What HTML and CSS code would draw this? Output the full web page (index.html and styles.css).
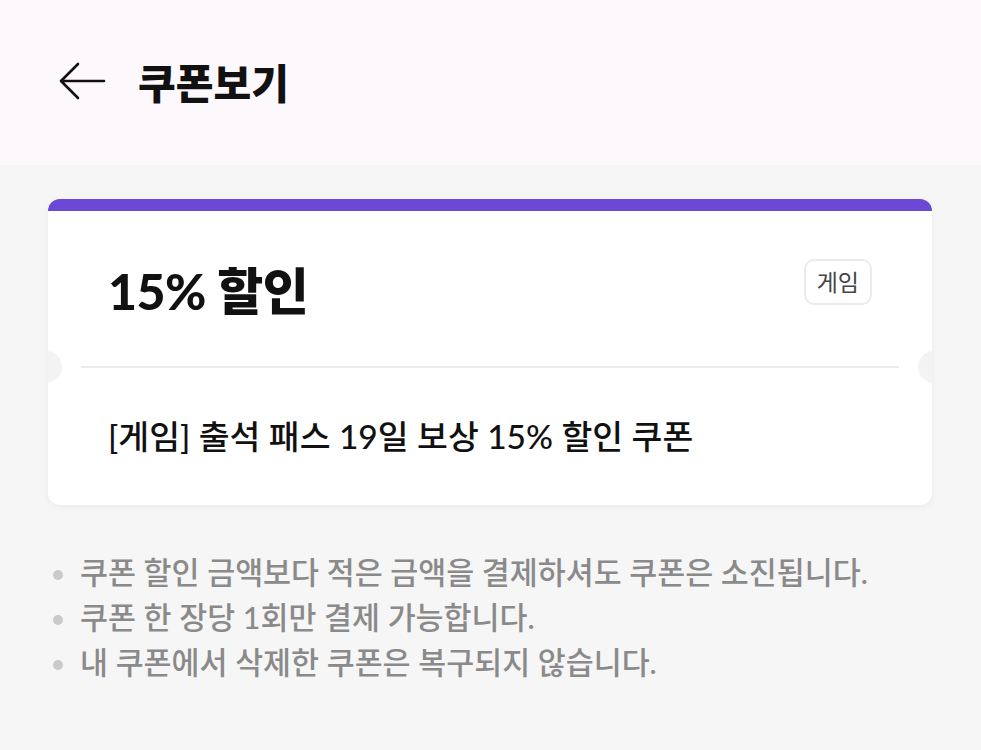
FILE: index.html
```html
<!DOCTYPE html>
<html lang="ko">
<head>
<meta charset="utf-8">
<link rel="stylesheet" href="styles.css">
</head>
<body>
<header class="header">
  <svg class="back" width="48" height="40" viewBox="0 0 48 40" aria-hidden="true">
    <path d="M46 20 H4 M20 3 L3 20 L20 37" fill="none" stroke="#111" stroke-width="2.6" stroke-linecap="round" stroke-linejoin="round"/>
  </svg>
  <h1 class="title">쿠폰보기</h1>
</header>
<main class="content">
  <section class="card">
    <div class="card-top">
      <div class="amount">15% 할인</div>
      <span class="tag">게임</span>
    </div>
    <div class="divider">
      <span class="notch notch-left"></span>
      <span class="line"></span>
      <span class="notch notch-right"></span>
    </div>
    <div class="card-bottom">
      <p class="desc">[게임] 출석 패스 19일 보상 15% 할인 쿠폰</p>
    </div>
  </section>
  <ul class="notes">
    <li>쿠폰 할인 금액보다 적은 금액을 결제하셔도 쿠폰은 소진됩니다.</li>
    <li>쿠폰 한 장당 1회만 결제 가능합니다.</li>
    <li>내 쿠폰에서 삭제한 쿠폰은 복구되지 않습니다.</li>
  </ul>
</main>
</body>
</html>
```

FILE: styles.css
```css
* { box-sizing: border-box; }
html, body {
  margin: 0;
  padding: 0;
}
body {
  font-family: Lato, "Noto Sans CJK KR", sans-serif;
  background: #f6f6f6;
  color: #111;
  width: 981px;
  height: 750px;
  overflow: hidden;
}
.header {
  height: 165px;
  background: #fdf8fc;
  display: flex;
  align-items: center;
  padding: 0 0 0 58px;
  gap: 32px;
}
.back {
  display: block;
  margin-top: -3px;
}
.title {
  margin: 0;
  font-size: 41px;
  font-weight: 900;
  letter-spacing: 0;
  margin-top: -4px;
}
.content {
  padding: 34px 49px 0 48px;
}
.card {
  background: #fff;
  border-radius: 12px;
  border-top: 12px solid #6b48d6;
  box-shadow: 0 2px 6px rgba(0,0,0,0.05);
  overflow: hidden;
}
.card-top {
  height: 155px;
  display: flex;
  align-items: center;
  justify-content: space-between;
  padding: 0 60px;
}
.amount {
  font-size: 50px;
  font-weight: 900;
  letter-spacing: -0.5px;
  margin-top: -2px;
}
.tag {
  font-size: 23px;
  color: #444;
  border: 2px solid #ebebeb;
  border-radius: 10px;
  padding: 6px 11px;
  margin-top: -14px;
  line-height: 30px;
}
.divider {
  position: relative;
  height: 2px;
  display: flex;
  align-items: center;
  padding: 0 33px;
}
.line {
  flex: 1;
  height: 2px;
  background: #ececec;
}
.notch {
  position: absolute;
  top: -15px;
  width: 32px;
  height: 32px;
  border-radius: 50%;
  background: #f3f3f3;
}
.notch-left { left: -18px; }
.notch-right { right: -18px; }
.card-bottom {
  height: 137px;
  display: flex;
  align-items: center;
  padding: 0 60px;
}
.desc {
  margin: 0;
  font-size: 33.5px;
  font-weight: 500;
  margin-top: -4px;
}
.notes {
  list-style: none;
  margin: 45px 0 0 0;
  padding: 0;
}
.notes li {
  position: relative;
  font-size: 30.4px;
  line-height: 45px;
  color: #8a8a8a;
  font-weight: 500;
  padding-left: 32px;
}
.notes li::before {
  content: "";
  position: absolute;
  left: 5px;
  top: 20px;
  width: 10px;
  height: 10px;
  border-radius: 50%;
  background: #cacaca;
}
```
